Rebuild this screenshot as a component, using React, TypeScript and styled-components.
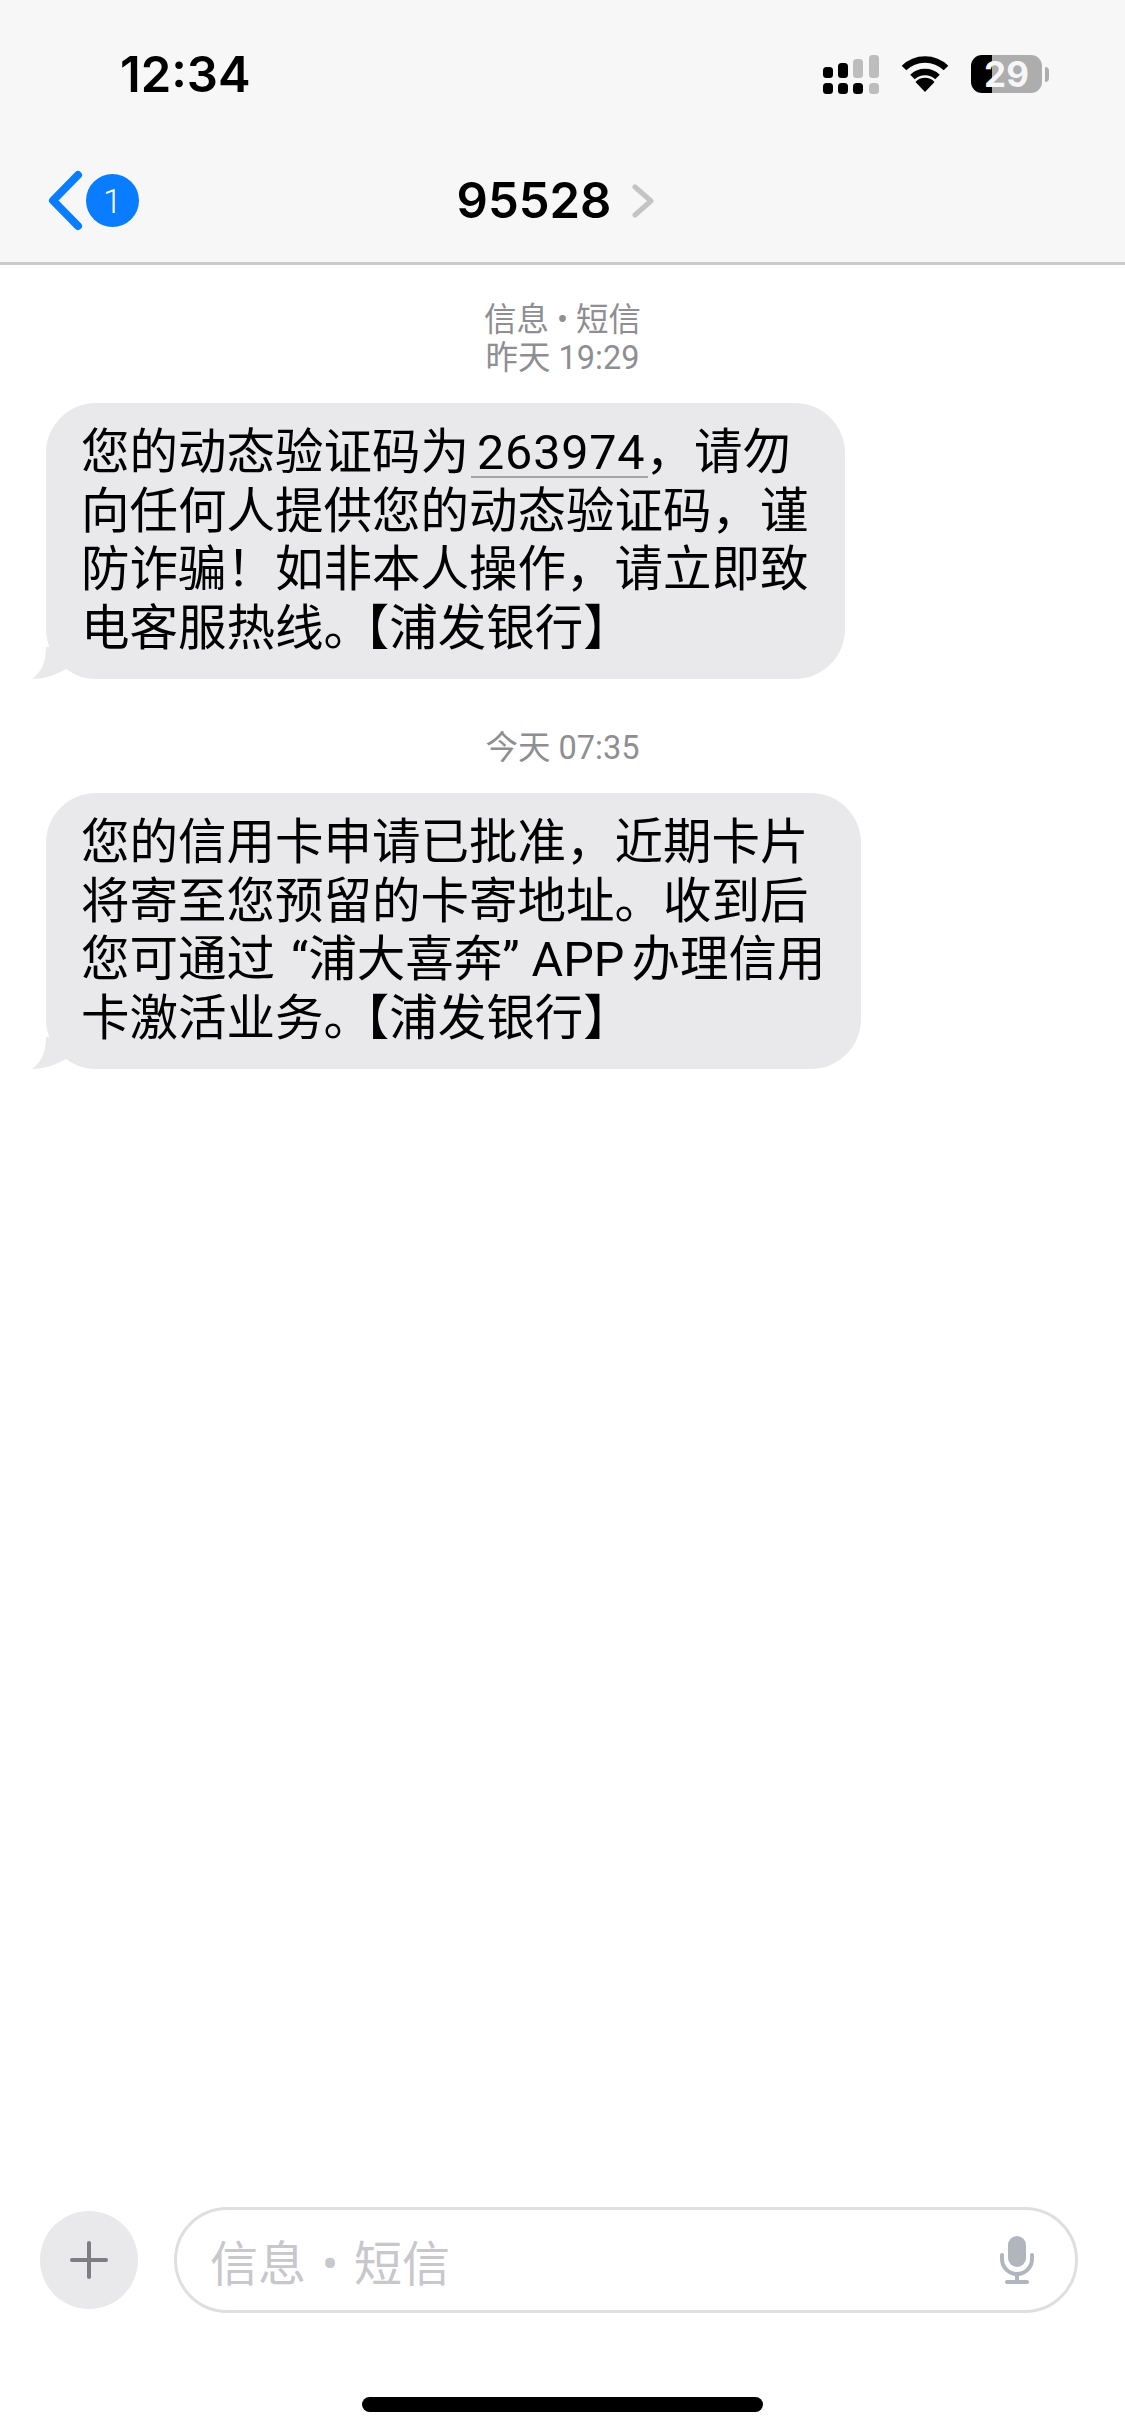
import styled, { createGlobalStyle } from "styled-components";

const GlobalStyle = createGlobalStyle`
  html, body {
    margin: 0;
    padding: 0;
    background: #fff;
  }
`

const Page = styled.div`
  display: flex;
  flex-direction: column;
  height: 2435px;
  font-family: Roboto, "Noto Sans CJK SC", sans-serif;
  color: #000;
  overflow: hidden;
`

const Header = styled.header`
  background: #f7f7f7;
  border-bottom: 3px solid #cbcbcb;
  padding: 50px 0 32px;
`

const StatusBar = styled.div`
  display: flex;
  align-items: center;
  justify-content: space-between;
  height: 48px;
  padding: 0 83px 0 120px;
`

const Time = styled.span`
  font-family: Inter, sans-serif;
  font-size: 49px;
  font-weight: 600;
`

const StatusIcons = styled.div`
  display: flex;
  align-items: center;
  gap: 22px;
`

const Battery = styled.div`
  position: relative;
  width: 71px;
  height: 38px;
  border-radius: 11px;
  background: linear-gradient(to right, #000 30%, #adadad 30%);
  color: #f6f6f6;
  display: flex;
  align-items: center;
  justify-content: center;
  font-family: Inter, sans-serif;
  font-size: 35px;
  font-weight: 700;

  &::after {
    content: "";
    position: absolute;
    right: -7px;
    top: 12px;
    width: 4px;
    height: 15px;
    border-radius: 0 4px 4px 0;
    background: #adadad;
  }
`

const NavBar = styled.nav`
  display: grid;
  grid-template-columns: 1fr auto 1fr;
  align-items: center;
  height: 60px;
  margin-top: 72px;
  padding: 0 61px 0 48px;
`

const Back = styled.div`
  display: flex;
  align-items: center;
  gap: 3px;
`

const Badge = styled.span`
  width: 53px;
  height: 53px;
  border-radius: 50%;
  background: #0a7cff;
  color: #fff;
  display: flex;
  align-items: center;
  justify-content: center;
  font-size: 34px;
  font-weight: 300;
`

const Contact = styled.div`
  display: flex;
  align-items: center;
  gap: 21px;
`

const ContactName = styled.span`
  font-family: Inter, sans-serif;
  font-size: 49px;
  font-weight: 600;
  line-height: 60px;
`

const Messages = styled.main`
  flex: 1;
  padding: 36px 0 0 46px;
  display: flex;
  flex-direction: column;
  align-items: flex-start;
`

const Caption = styled.div`
  align-self: center;
  margin-left: -46px;
  margin-bottom: 26px;
  text-align: center;
  font-size: 32.5px;
  line-height: 38px;
  color: #8e8e93;

  &:not(:first-child) {
    margin-top: 50px;
  }
`

const Bubble = styled.div`
  position: relative;
  background: #e9e9eb;
  border-radius: 50px;
  padding: 21px 36px 21px 35px;
  font-size: 48.5px;
  line-height: 58.5px;
`

const Line = styled.span`
  display: block;
  white-space: nowrap;
`

const Code = styled.span`
  position: relative;
  display: inline-block;
  padding-left: 8px;
  letter-spacing: 0.8px;

  &::after {
    content: "";
    position: absolute;
    left: 2px;
    right: -3px;
    bottom: 5px;
    height: 2px;
    background: #a4a4a8;
  }
`

// full stop followed by a bracket sits tighter on the phone
const TightStop = styled.span`
  letter-spacing: -7px;
`

const Spaced = styled.span<{ $left: number }>`
  margin-left: ${(p) => p.$left}px;
`

const TailIcon = styled.svg`
  position: absolute;
  left: -14px;
  bottom: 0;
`

const Composer = styled.div`
  display: flex;
  align-items: center;
  gap: 36px;
  padding: 0 47px 0 40px;
`

const PlusButton = styled.div`
  width: 98px;
  height: 98px;
  flex: none;
  border-radius: 50%;
  background: #e9e9eb;
  display: flex;
  align-items: center;
  justify-content: center;
`

const Field = styled.div`
  flex: 1;
  height: 106px;
  box-sizing: border-box;
  border: 3px solid #dfdfdf;
  border-radius: 53px;
  padding: 0 41px 0 33px;
  display: flex;
  align-items: center;
  justify-content: space-between;
`

const Placeholder = styled.span`
  font-size: 48px;
  word-spacing: 4px;
  color: #c7c7cc;
`

const HomeArea = styled.div`
  display: flex;
  justify-content: center;
  padding: 84px 0 23px;
`

const HomeBar = styled.div`
  width: 401px;
  height: 15px;
  border-radius: 8px;
  background: #000;
`

const SignalIcon = () => {
    const on = "#000"
    const off = "#bdbdbd"
    return (
        <svg width="56" height="39" viewBox="0 0 56 39">
            <rect x="0" y="12" width="10" height="11" rx="3.5" fill={on} />
            <rect x="15" y="8" width="10" height="15" rx="3.5" fill={on} />
            <rect x="30" y="4" width="10" height="19" rx="3.5" fill={off} />
            <rect x="46" y="0" width="10" height="23" rx="3.5" fill={off} />
            <rect x="0" y="28" width="10" height="11" rx="3.5" fill={on} />
            <rect x="15" y="28" width="10" height="11" rx="3.5" fill={on} />
            <rect x="30" y="28" width="10" height="11" rx="3.5" fill={on} />
            <rect x="46" y="28" width="10" height="11" rx="3.5" fill={off} />
        </svg>
    )
}

const WifiIcon = () => (
    <svg width="48" height="36" viewBox="0 0 48 36" fill="none">
        <path d="M3 12 A30 30 0 0 1 45 12" stroke="#000" strokeWidth="6.5" />
        <path d="M11.5 21 A18 18 0 0 1 36.5 21" stroke="#000" strokeWidth="6.5" />
        <path d="M24 36 L14.5 26 A13 13 0 0 1 33.5 26 Z" fill="#000" />
    </svg>
)

const Tail = () => (
    <TailIcon width="34" height="32" viewBox="0 0 34 32">
        <path d="M14 0 C14 14 10 25 0 32 C12 32 24 28 34 22 L34 0 Z" fill="#e9e9eb" />
    </TailIcon>
)

const MicIcon = () => (
    <svg width="34" height="48" viewBox="0 0 34 48" fill="none" stroke="#b1b5bd" strokeWidth="4" strokeLinecap="round">
        <rect x="8" y="0" width="18" height="31" rx="9" fill="#b1b5bd" stroke="none" />
        <path d="M2 19 V23 A15 15 0 0 0 32 23 V19" />
        <path d="M17 38 V46" strokeLinecap="butt" />
        <path d="M7 46 H27" />
    </svg>
)

const App = () => {
    return (
        <Page>
            <GlobalStyle />
            <Header>
                <StatusBar>
                    <Time>12:34</Time>
                    <StatusIcons>
                        <SignalIcon />
                        <WifiIcon />
                        <Battery>29</Battery>
                    </StatusIcons>
                </StatusBar>
                <NavBar>
                    <Back>
                        <svg width="35" height="61" viewBox="0 0 35 61" fill="none">
                            <path d="M30 5 L5 30.5 L30 56" stroke="#0a7cff" strokeWidth="8" strokeLinecap="round" strokeLinejoin="round" />
                        </svg>
                        <Badge>1</Badge>
                    </Back>
                    <Contact>
                        <ContactName>95528</ContactName>
                        <svg width="23" height="34" viewBox="0 0 23 34" fill="none">
                            <path d="M3 3 L19 17 L3 31" stroke="#c4c4c6" strokeWidth="5" strokeLinecap="round" strokeLinejoin="round" />
                        </svg>
                    </Contact>
                </NavBar>
            </Header>
            <Messages>
                <Caption>
                    <div>信息 • 短信</div>
                    <div>昨天 19:29</div>
                </Caption>
                <Bubble>
                    <Tail />
                    <Line>您的动态验证码为<Code>263974</Code>，请勿</Line>
                    <Line>向任何人提供您的动态验证码，谨</Line>
                    <Line>防诈骗！如非本人操作，请立即致</Line>
                    <Line>电客服热线<TightStop>。</TightStop>【浦发银行】</Line>
                </Bubble>
                <Caption>今天 07:35</Caption>
                <Bubble>
                    <Tail />
                    <Line>您的信用卡申请已批准，近期卡片</Line>
                    <Line>将寄至您预留的卡寄地址。收到后</Line>
                    <Line>您可通过 <Spaced $left={4}>“浦大喜奔”</Spaced> APP<Spaced $left={7}>办理信用</Spaced></Line>
                    <Line>卡激活业务<TightStop>。</TightStop>【浦发银行】</Line>
                </Bubble>
            </Messages>
            <Composer>
                <PlusButton>
                    <svg width="38" height="38" viewBox="0 0 38 38" stroke="#7d7d82" strokeWidth="4" strokeLinecap="round">
                        <path d="M19 2 V36" />
                        <path d="M2 19 H36" />
                    </svg>
                </PlusButton>
                <Field>
                    <Placeholder>信息 • 短信</Placeholder>
                    <MicIcon />
                </Field>
            </Composer>
            <HomeArea>
                <HomeBar />
            </HomeArea>
        </Page>
    )
}

export default App
